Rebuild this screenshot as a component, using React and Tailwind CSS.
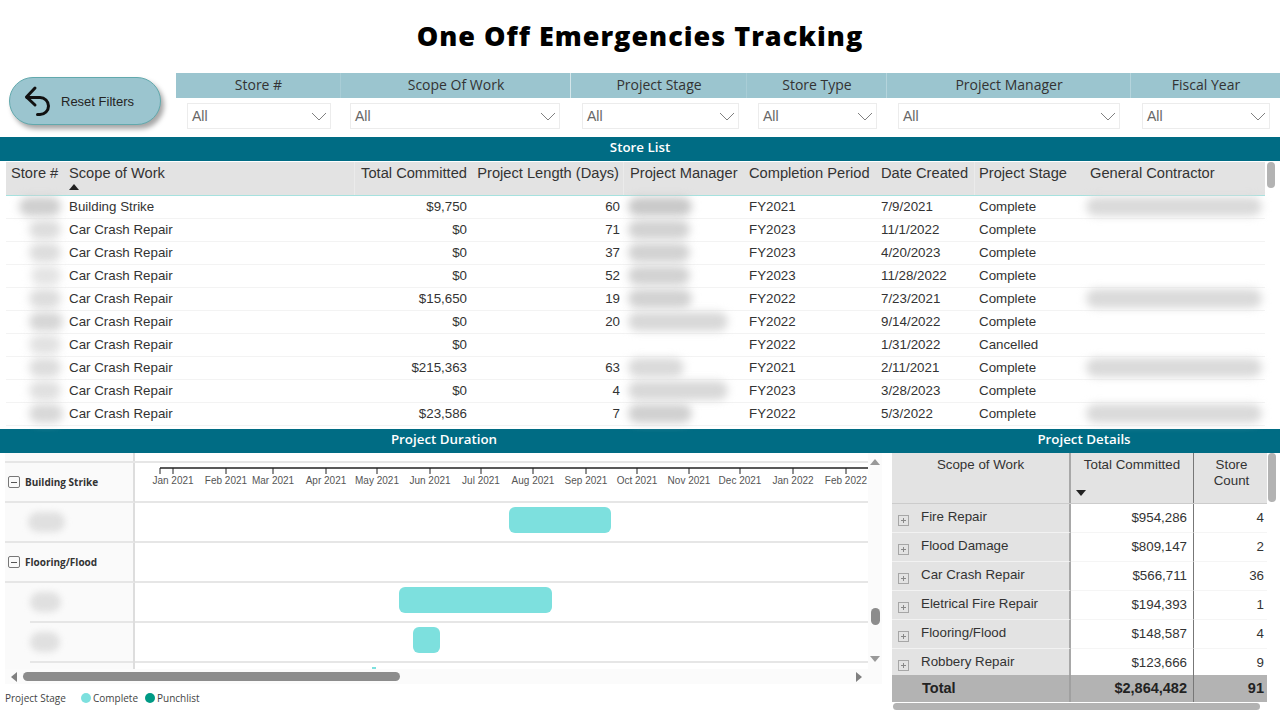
import React from "react";

const filters = [
  { label: "Store #", width: "w-[165px]", head: "border-r border-[#a9cdd6]", box: "ml-[11px] w-[144px]" },
  { label: "Scope Of Work", width: "w-[230px]", head: "border-r border-[#d5e6ea]", box: "ml-[9px] w-[210px]" },
  { label: "Project Stage", width: "w-[176px]", head: "border-r border-[#a9cdd6]", box: "ml-[11px] w-[157px]" },
  { label: "Store Type", width: "w-[140px]", head: "border-r border-[#b5d4dc]", box: "ml-[11px] w-[119px]" },
  { label: "Project Manager", width: "w-[244px]", head: "border-r border-[#b5d4dc]", box: "ml-[11px] w-[222px]" },
  { label: "Fiscal Year", width: "w-[149px]", head: "", box: "ml-[11px] w-[128px]" },
];

const rows = [
  { s: "w-[42px] ml-[13px] bg-[#cfcfcf]", scope: "Building Strike", c: "$9,750", d: "60", m: "w-[64px] bg-[#c9c9c9]", fy: "FY2021", dt: "7/9/2021", st: "Complete", g: true },
  { s: "w-[32px] ml-[23px] bg-[#dddddd]", scope: "Car Crash Repair", c: "$0", d: "71", m: "w-[62px] bg-[#d2d2d2]", fy: "FY2023", dt: "11/1/2022", st: "Complete" },
  { s: "w-[32px] ml-[23px] bg-[#dddddd]", scope: "Car Crash Repair", c: "$0", d: "37", m: "w-[62px] bg-[#d2d2d2]", fy: "FY2023", dt: "4/20/2023", st: "Complete" },
  { s: "w-[30px] ml-[25px] bg-[#e4e4e4]", scope: "Car Crash Repair", c: "$0", d: "52", m: "w-[62px] bg-[#d2d2d2]", fy: "FY2023", dt: "11/28/2022", st: "Complete" },
  { s: "w-[32px] ml-[23px] bg-[#dddddd]", scope: "Car Crash Repair", c: "$15,650", d: "19", m: "w-[64px] bg-[#d2d2d2]", fy: "FY2022", dt: "7/23/2021", st: "Complete", g: true },
  { s: "w-[34px] ml-[23px] bg-[#d6d6d6]", scope: "Car Crash Repair", c: "$0", d: "20", m: "w-[100px] bg-[#d8d8d8]", fy: "FY2022", dt: "9/14/2022", st: "Complete" },
  { s: "w-[32px] ml-[23px] bg-[#e2e2e2]", scope: "Car Crash Repair", c: "$0", d: "", m: "", fy: "FY2022", dt: "1/31/2022", st: "Cancelled" },
  { s: "w-[32px] ml-[23px] bg-[#dddddd]", scope: "Car Crash Repair", c: "$215,363", d: "63", m: "w-[56px] bg-[#dadada]", fy: "FY2021", dt: "2/11/2021", st: "Complete", g: true },
  { s: "w-[32px] ml-[23px] bg-[#e0e0e0]", scope: "Car Crash Repair", c: "$0", d: "4", m: "w-[100px] bg-[#d8d8d8]", fy: "FY2023", dt: "3/28/2023", st: "Complete" },
  { s: "w-[34px] ml-[23px] bg-[#d8d8d8]", scope: "Car Crash Repair", c: "$23,586", d: "7", m: "w-[64px] bg-[#d0d0d0]", fy: "FY2022", dt: "5/3/2022", st: "Complete", g: true },
];

const months = [
  ["Jan 2021", 38], ["Feb 2021", 91], ["Mar 2021", 138], ["Apr 2021", 191], ["May 2021", 242], ["Jun 2021", 295], ["Jul 2021", 346],
  ["Aug 2021", 398], ["Sep 2021", 451], ["Oct 2021", 502], ["Nov 2021", 554], ["Dec 2021", 605], ["Jan 2022", 658], ["Feb 2022", 711],
];

const details = [
  ["Fire Repair", "$954,286", "4"],
  ["Flood Damage", "$809,147", "2"],
  ["Car Crash Repair", "$566,711", "36"],
  ["Eletrical Fire Repair", "$194,393", "1"],
  ["Flooring/Flood", "$148,587", "4"],
  ["Robbery Repair", "$123,666", "9"],
];

function Chevron() {
  return (
    <svg width="16" height="9" viewBox="0 0 16 9" fill="none" stroke="#808080" strokeWidth="1">
      <path d="M1 1l7 7 7-7" />
    </svg>
  );
}

function SectionBar({ children, className }) {
  return (
    <div className={"flex h-[24px] items-center justify-center bg-[#006c84] font-['Open_Sans'] text-[13.33px] font-semibold text-white " + className}>
      {children}
    </div>
  );
}

function Blob({ className }) {
  return <div className={"h-[19px] rounded-full blur-[4px] " + className} />;
}

function MinusBox() {
  return (
    <div className="flex h-[12px] w-[12px] shrink-0 items-center justify-center rounded-[2px] border border-[#777777]">
      <div className="h-px w-[6px] bg-[#555555]" />
    </div>
  );
}

export default function App() {
  return (
    <div className="flex h-[720px] w-[1280px] flex-col overflow-hidden bg-white font-['Liberation_Sans',sans-serif] text-[#333333]">
      <h1 className="flex h-[73px] shrink-0 items-center justify-center font-['Open_Sans'] text-[27px] font-extrabold tracking-[1px] text-black">
        One Off Emergencies Tracking
      </h1>

      <div className="flex h-[64px] shrink-0">
        <div className="w-[176px] shrink-0 pl-[9px] pt-[4px]">
          <button className="flex h-[48px] w-[152px] items-center rounded-[24px] border border-[#62a9ad] bg-[#9bc5cf] pl-[14px] text-[13px] text-[#252423] shadow-[3px_4px_5px_rgba(0,0,0,0.35)]">
            <svg width="30" height="32" viewBox="0 0 30 32" fill="none" stroke="#111111" strokeWidth="3" strokeLinecap="round" strokeLinejoin="round">
              <path d="M11 3L2.5 12l8.5 8" />
              <path d="M3 12.5h13a8.5 8.5 0 0 1 0 17h-2.5" />
            </svg>
            <span className="ml-[7px] mt-[1px]">Reset Filters</span>
          </button>
        </div>
        <div className="flex">
          {filters.map((f) => (
            <div key={f.label} className={"flex flex-col " + f.width}>
              <div className={"flex h-[25px] items-center justify-center bg-[#9bc5cf] pb-[3px] pl-[1px] font-['Open_Sans'] text-[14px] text-[#333333] " + f.head}>
                {f.label}
              </div>
              <div className={"mt-[5px] flex h-[26px] items-center justify-between border border-[#ececec] pl-[4px] pr-[3px] text-[14px] text-[#666666] " + f.box}>
                All
                <Chevron />
              </div>
            </div>
          ))}
        </div>
      </div>

      <SectionBar className="shrink-0 pb-[2px]">Store List</SectionBar>

      <div className="flex h-[268px] shrink-0 pl-[6px] pt-px">
        <div className="w-[1259px] text-[13.33px]">
          <div className="grid h-[34px] grid-cols-[59px_290px_116px_153px_121px_132px_98px_111px_179px] border-b border-[#a6e2df] bg-[#e3e3e3] text-[14.67px] leading-[22px] text-[#333333]">
            <div className="whitespace-nowrap pl-[5px]">Store #</div>
            <div className="relative border-r border-[#ebebeb] pl-[4px]">
              Scope of Work
              <svg className="absolute left-[4px] top-[22px]" width="10" height="6" viewBox="0 0 10 6" fill="#222222"><path d="M5 0l5 6H0z" /></svg>
            </div>
            <div className="whitespace-nowrap pr-[4px] text-right">Total Committed</div>
            <div className="whitespace-nowrap border-r border-[#ebebeb] pr-[4px] text-right">Project Length (Days)</div>
            <div className="whitespace-nowrap pl-[6px]">Project Manager</div>
            <div className="whitespace-nowrap pl-[4px]">Completion Period</div>
            <div className="whitespace-nowrap border-r border-[#ebebeb] pl-[4px]">Date Created</div>
            <div className="whitespace-nowrap pl-[4px]">Project Stage</div>
            <div className="whitespace-nowrap pl-[4px]">General Contractor</div>
          </div>
          {rows.map((r, i) => (
            <div key={i} className="grid h-[23px] grid-cols-[59px_290px_116px_153px_121px_132px_98px_111px_179px] items-center border-b border-[#f3f3f3] pb-[1px] text-[#333333]">
              <div><Blob className={r.s} /></div>
              <div className="pl-[4px]">{r.scope}</div>
              <div className="pr-[4px] text-right">{r.c}</div>
              <div className="pr-[4px] text-right">{r.d}</div>
              <div className="pl-[4px]">{r.m && <Blob className={r.m} />}</div>
              <div className="pl-[4px]">{r.fy}</div>
              <div className="pl-[4px]">{r.dt}</div>
              <div className="pl-[4px]">{r.st}</div>
              <div>{r.g && <Blob className="w-[176px] bg-[#dadada]" />}</div>
            </div>
          ))}
        </div>
        <div className="ml-[2px] h-[26px] w-[8px] rounded-full bg-[#b3b3b3]" />
      </div>

      <div className="flex min-h-0 flex-1">
        <div className="flex w-[886px] shrink-0 flex-col">
          <SectionBar className="shrink-0 pb-[3px] pl-[2px]">Project Duration</SectionBar>

          <div className="ml-[5px] flex h-[216px] w-[877px] shrink-0">
            <div className="w-[863px] shrink-0 overflow-hidden">
              <div className="flex h-[10px] border-b-2 border-[#e6e6e6]">
                <div className="w-[130px] shrink-0 border-r-2 border-[#dddddd] bg-[#fafafa]" />
              </div>
              <div className="flex h-[40px]">
                <div className="flex h-full w-[130px] shrink-0 items-center gap-[5px] border-r-2 border-b-2 border-[#dddddd] border-b-[#e6e6e6] bg-[#fafafa] pl-[3px] font-['Open_Sans'] text-[10px] font-bold text-[#333333]">
                  <MinusBox />
                  Building Strike
                </div>
                <div className="flex-1 border-b-2 border-[#e6e6e6]">
                  <svg width="733" height="38" viewBox="0 0 733 38">
                    <line x1="25" y1="5" x2="733" y2="5" stroke="#222222" strokeWidth="1.5" />
                    <line x1="25" y1="5" x2="25" y2="11" stroke="#222222" />
                    {months.map(([m, x]) => (
                      <g key={m}>
                        <line x1={x} y1="5" x2={x} y2="11" stroke="#222222" />
                        <text x={x} y="21" textAnchor="middle" fontSize="10" fill="#555555" fontFamily="Liberation Sans">{m}</text>
                      </g>
                    ))}
                  </svg>
                </div>
              </div>
              <div className="flex h-[40px]">
                <div className="flex w-[130px] shrink-0 items-center border-r-2 border-b-2 border-[#dddddd] border-b-[#e6e6e6] bg-[#fafafa]">
                  <div className="ml-[23px] h-[20px] w-[37px] rounded-full bg-[#e0e0e0] blur-[3px]" />
                </div>
                <div className="flex flex-1 items-center border-b-2 border-[#e6e6e6]">
                  <div className="mb-[4px] ml-[374px] h-[26px] w-[102px] rounded-[6px] bg-[#7de0de]" />
                </div>
              </div>
              <div className="flex h-[40px]">
                <div className="flex h-full w-[130px] shrink-0 items-center gap-[5px] border-r-2 border-b-2 border-[#dddddd] border-b-[#e6e6e6] bg-[#fafafa] pl-[3px] font-['Open_Sans'] text-[10px] font-bold text-[#333333]">
                  <MinusBox />
                  Flooring/Flood
                </div>
                <div className="flex-1 border-b-2 border-[#e6e6e6]" />
              </div>
              <div className="flex h-[40px]">
                <div className="flex w-[130px] shrink-0 items-center border-r-2 border-[#dddddd] bg-[#fafafa]">
                  <div className="ml-[25px] w-[105px] border-b-2 border-[#e6e6e6]">
                    <div className="flex h-[38px] items-center"><div className="h-[20px] w-[31px] rounded-full bg-[#e0e0e0] blur-[3px]" /></div>
                  </div>
                </div>
                <div className="flex flex-1 items-center border-b-2 border-[#e6e6e6]">
                  <div className="mb-[4px] ml-[264px] h-[26px] w-[153px] rounded-[6px] bg-[#7de0de]" />
                </div>
              </div>
              <div className="flex h-[40px]">
                <div className="flex w-[130px] shrink-0 items-center border-r-2 border-[#dddddd] bg-[#fafafa]">
                  <div className="ml-[25px] w-[105px] border-b-2 border-[#e6e6e6]">
                    <div className="flex h-[38px] items-center"><div className="h-[20px] w-[30px] rounded-full bg-[#e0e0e0] blur-[3px]" /></div>
                  </div>
                </div>
                <div className="flex flex-1 items-center border-b-2 border-[#e6e6e6]">
                  <div className="mb-[4px] ml-[278px] h-[26px] w-[27px] rounded-[6px] bg-[#7de0de]" />
                </div>
              </div>
              <div className="flex h-[6px]">
                <div className="w-[130px] shrink-0 border-r-2 border-[#dddddd] bg-[#fafafa]" />
                <div className="ml-[237px] mt-[4px] h-[2px] w-[4px] bg-[#7de0de]" />
              </div>
            </div>
            <div className="flex w-[14px] flex-col items-center bg-[#fbfbfb] pt-[6px]">
              <svg width="10" height="6" viewBox="0 0 10 6" fill="#999999"><path d="M5 0l5 6H0z" /></svg>
              <div className="mt-[143px] h-[17px] w-[9px] rounded-full bg-[#8c8c8c]" />
              <div className="mt-[31px]">
                <svg width="10" height="6" viewBox="0 0 10 6" fill="#999999"><path d="M5 6l5-6H0z" /></svg>
              </div>
            </div>
          </div>

          <div className="ml-[5px] flex h-[15px] w-[877px] shrink-0 items-center bg-[#fbfbfb] pl-[6px]">
            <svg width="6" height="10" viewBox="0 0 6 10" fill="#808080"><path d="M0 5l6-5v10z" /></svg>
            <div className="ml-[6px] h-[9px] w-[377px] rounded-full bg-[#8c8c8c]" />
            <svg className="ml-[456px]" width="6" height="10" viewBox="0 0 6 10" fill="#808080"><path d="M6 5L0 0v10z" /></svg>
          </div>

          <div className="ml-[5px] mt-[7px] flex items-center font-['Open_Sans'] text-[10px] leading-[14px] text-[#444444]">
            <span className="w-[76px]">Project Stage</span>
            <span className="h-[10px] w-[10px] rounded-full bg-[#7de0de]" />
            <span className="ml-[2px] w-[52px]">Complete</span>
            <span className="h-[10px] w-[10px] rounded-full bg-[#009a85]" />
            <span className="ml-[2px]">Punchlist</span>
          </div>
        </div>

        <div className="flex min-w-0 flex-1 flex-col">
          <SectionBar className="shrink-0 pb-[3px] pl-[2px]">Project Details</SectionBar>
          <div className="flex pl-[6px]">
            <div className="w-[375px] text-[13.33px] text-[#333333]">
              <div className="grid h-[51px] grid-cols-[179px_123px_73px] border-b border-[#cccccc] bg-[#e3e3e3]">
                <div className="border-r-2 border-[#a8a8a8] pt-[4px] text-center leading-[16px]">Scope of Work</div>
                <div className="relative border-r border-[#777777] pt-[4px] text-center leading-[16px]">
                  Total Committed
                  <svg className="absolute left-[5px] top-[37px]" width="10" height="6" viewBox="0 0 10 6" fill="#222222"><path d="M5 6l5-6H0z" /></svg>
                </div>
                <div className="pl-[2px] pt-[4px] text-center leading-[16px]">Store<br />Count</div>
              </div>
              <div className="h-[171px] overflow-hidden">
                {details.map((d) => (
                  <div key={d[0]} className="grid h-[29px] grid-cols-[179px_123px_73px]">
                    <div className="flex items-center border-r-2 border-b border-[#a8a8a8] border-b-[#f2f2f2] bg-[#e3e3e3] pl-[6px]">
                      <div className="relative mt-[5px] h-[11px] w-[11px] shrink-0 border border-[#a6a6a6]">
                        <div className="absolute left-[2px] top-[4px] h-px w-[5px] bg-[#888888]" />
                        <div className="absolute left-[4px] top-[2px] h-[5px] w-px bg-[#888888]" />
                      </div>
                      <span className="ml-[12px] -mt-[2px]">{d[0]}</span>
                    </div>
                    <div className="flex items-center justify-end border-r border-b border-[#777777] border-b-[#f5f5f5] pb-[1px] pr-[6px]">{d[1]}</div>
                    <div className="flex items-center justify-end border-b border-[#f5f5f5] pb-[1px] pr-[3px]">{d[2]}</div>
                  </div>
                ))}
              </div>
              <div className="grid h-[27px] grid-cols-[179px_123px_73px] bg-[#b3b3b3] text-[14.5px] font-bold text-[#222222]">
                <div className="flex items-center border-r-2 border-[#a0a0a0] pl-[30px]">Total</div>
                <div className="flex items-center justify-end border-r border-[#777777] pr-[6px]">$2,864,482</div>
                <div className="flex items-center justify-end pr-[3px]">91</div>
              </div>
              <div className="ml-px mt-px h-[7px] w-[367px] rounded-full bg-[#b3b3b3]" />
            </div>
            <div className="ml-px h-[49px] w-[8px] rounded-full bg-[#b3b3b3]" />
          </div>
        </div>
      </div>
    </div>
  );
}
